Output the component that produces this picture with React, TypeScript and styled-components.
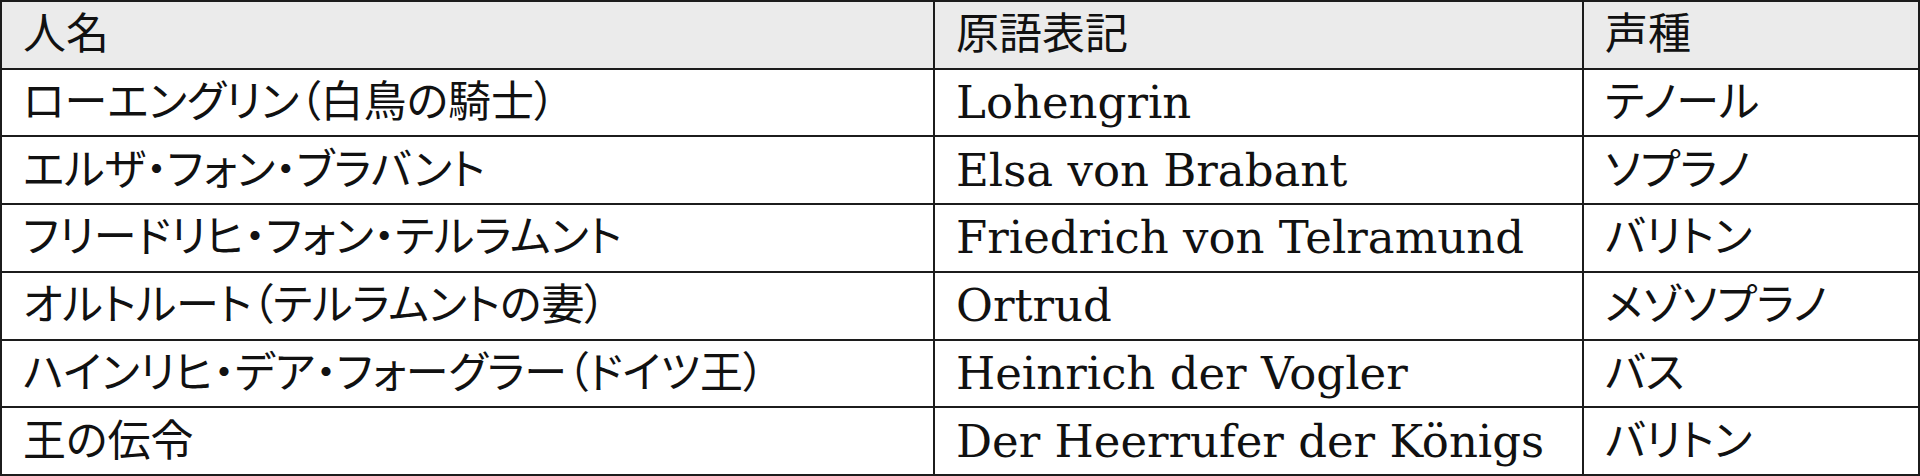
import * as React from 'react';
import styled, { createGlobalStyle } from 'styled-components';

const GlobalStyle = createGlobalStyle`
  html, body {
    margin: 0;
    padding: 0;
    background: #ffffff;
  }
`;

const Table = styled.table`
  width: 1920px;
  height: 476px;
  table-layout: fixed;
  border-collapse: collapse;
  font-family: 'DejaVu Serif', 'Noto Sans CJK JP', serif;
  font-size: 43px;
  color: #111111;
  font-feature-settings: 'palt';
`;

const Cell = styled.td<{ header?: boolean; latin?: boolean }>`
  border: 2px solid #1c1c1c;
  padding: 0 0 0 21px;
  background: ${({ header }) => (header ? '#ebebeb' : '#ffffff')};
  font-size: ${({ latin }) => (latin ? '45px' : '43px')};
  font-weight: normal;
  text-align: left;
  vertical-align: middle;
  white-space: nowrap;
  line-height: 1;
`;

const Row = styled.tr`
  height: 67.7px;
`;

interface Role {
  name: string;
  original: string;
  voice: string;
}

const roles: Role[] = [
  { name: 'ローエングリン（白鳥の騎士）', original: 'Lohengrin', voice: 'テノール' },
  { name: 'エルザ・フォン・ブラバント', original: 'Elsa von Brabant', voice: 'ソプラノ' },
  { name: 'フリードリヒ・フォン・テルラムント', original: 'Friedrich von Telramund', voice: 'バリトン' },
  { name: 'オルトルート（テルラムントの妻）', original: 'Ortrud', voice: 'メゾソプラノ' },
  { name: 'ハインリヒ・デア・フォーグラー（ドイツ王）', original: 'Heinrich der Vogler', voice: 'バス' },
  { name: '王の伝令', original: 'Der Heerrufer der Königs', voice: 'バリトン' },
];

export default function App() {
  return (
    <>
      <GlobalStyle />
      <Table>
        <colgroup>
          <col style={{ width: 933 }} />
          <col style={{ width: 649 }} />
          <col />
        </colgroup>
        <thead>
          <Row>
            <Cell as="th" header>人名</Cell>
            <Cell as="th" header>原語表記</Cell>
            <Cell as="th" header>声種</Cell>
          </Row>
        </thead>
        <tbody>
          {roles.map((r) => (
            <Row key={r.original}>
              <Cell>{r.name}</Cell>
              <Cell latin>{r.original}</Cell>
              <Cell>{r.voice}</Cell>
            </Row>
          ))}
        </tbody>
      </Table>
    </>
  );
}
